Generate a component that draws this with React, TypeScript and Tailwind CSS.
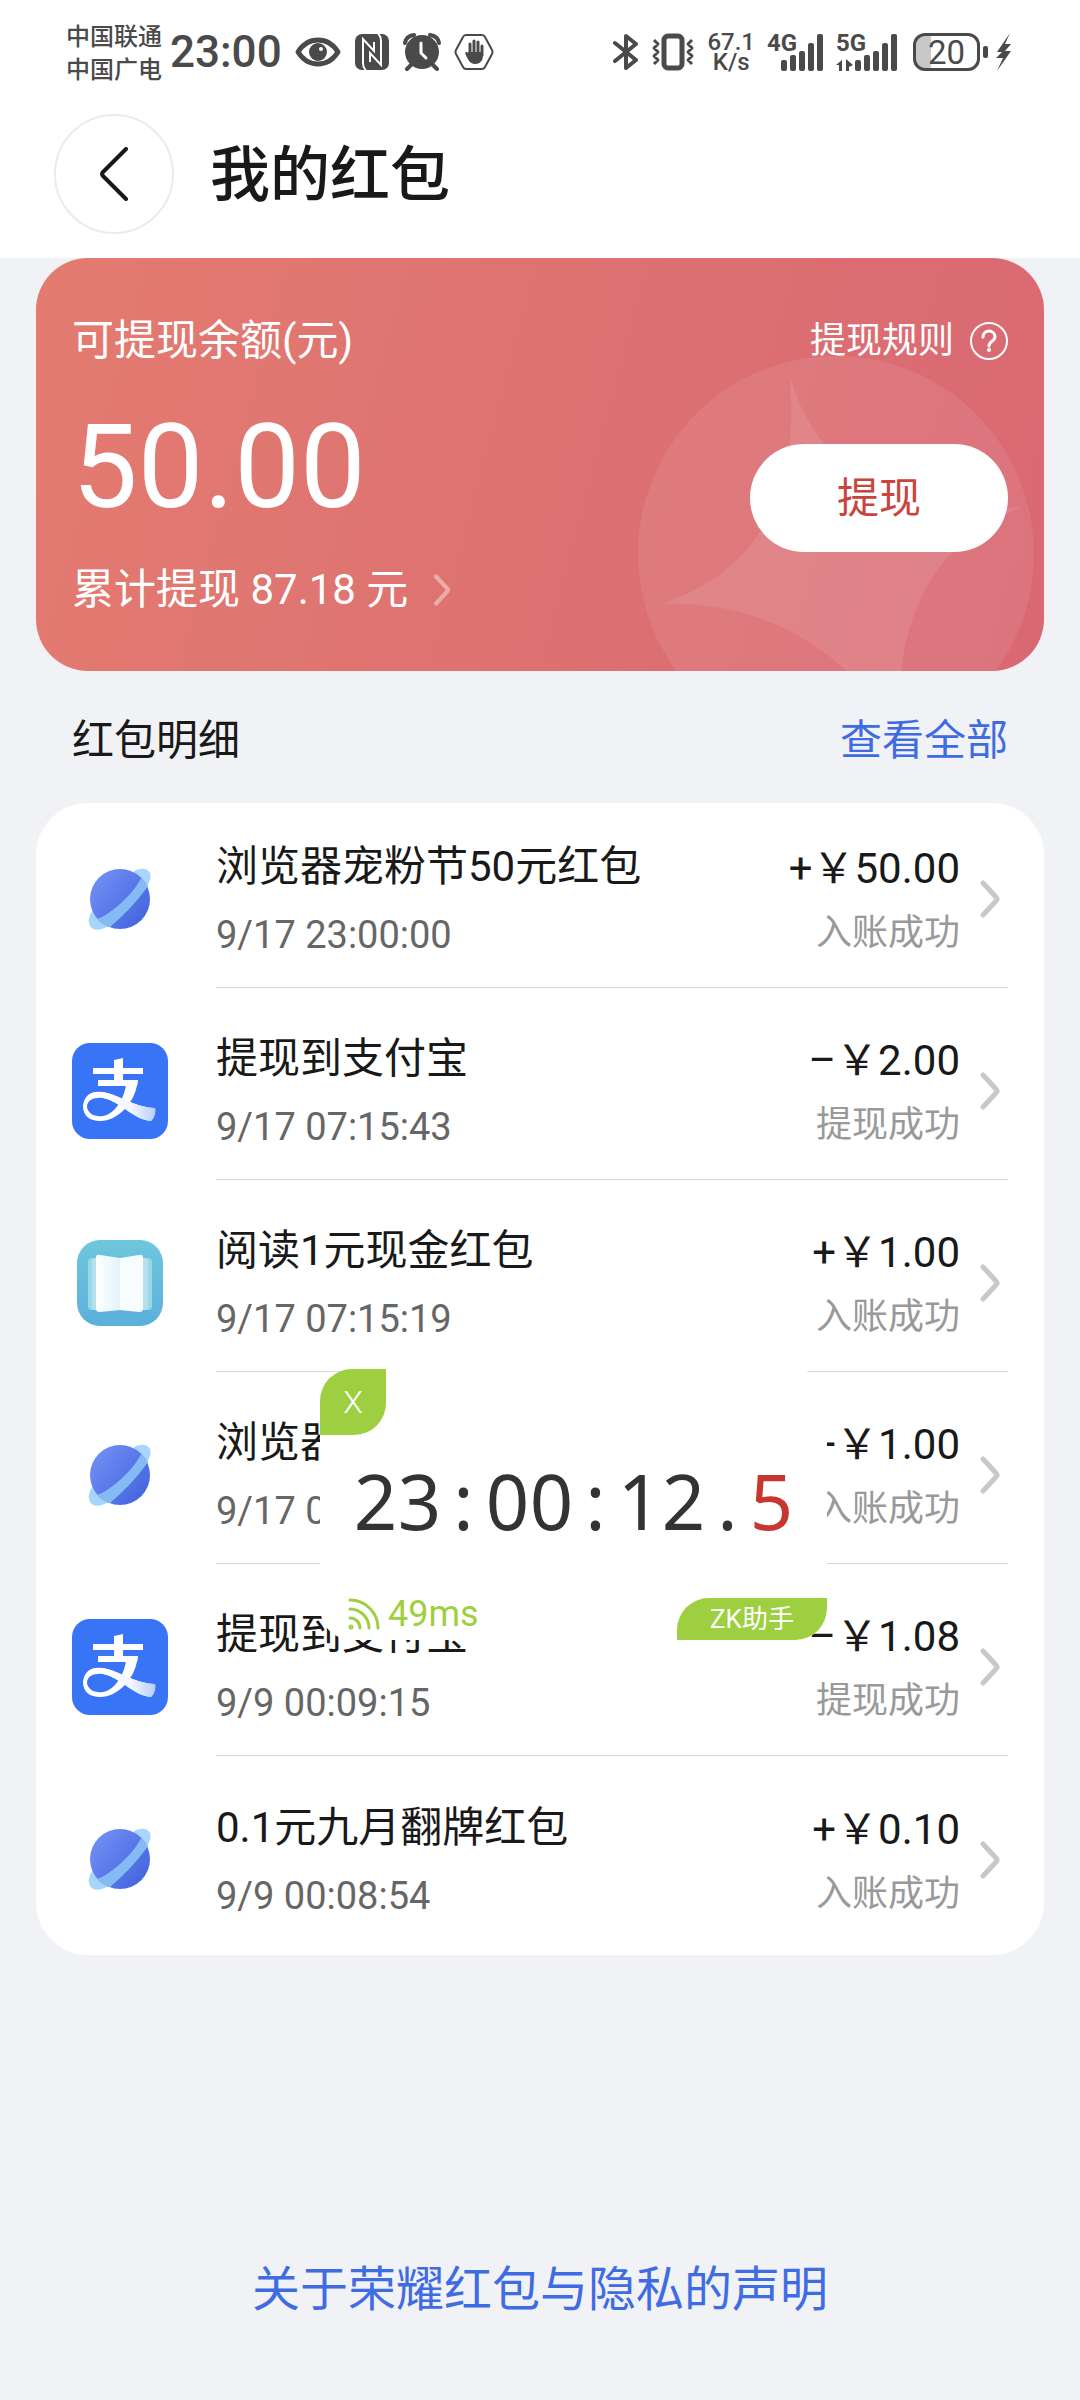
import type { ReactNode } from "react";

type Source = "browser" | "alipay" | "reader";

interface Entry {
  source: Source;
  title: string;
  time: string;
  amount: string;
  status: string;
}

const entries: Entry[] = [
  { source: "browser", title: "浏览器宠粉节50元红包", time: "9/17 23:00:00", amount: "+￥50.00", status: "入账成功" },
  { source: "alipay", title: "提现到支付宝", time: "9/17 07:15:43", amount: "–￥2.00", status: "提现成功" },
  { source: "reader", title: "阅读1元现金红包", time: "9/17 07:15:19", amount: "+￥1.00", status: "入账成功" },
  { source: "browser", title: "浏览器红包", time: "9/17 07:14:52", amount: "+￥1.00", status: "入账成功" },
  { source: "alipay", title: "提现到支付宝", time: "9/9 00:09:15", amount: "–￥1.08", status: "提现成功" },
  { source: "browser", title: "0.1元九月翻牌红包", time: "9/9 00:08:54", amount: "+￥0.10", status: "入账成功" },
];

function BrowserIcon() {
  return (
    <svg viewBox="0 0 64 64" className="size-16">
      <defs>
        <linearGradient id="planet" x1="0" y1="0.1" x2="1" y2="0.9">
          <stop offset="0" stopColor="#7393f3" />
          <stop offset="0.5" stopColor="#5b78ea" />
          <stop offset="1" stopColor="#4263dd" />
        </linearGradient>
      </defs>
      <path
        d="M46 4 C56 -1 65 3 62 13 C56 30 30 57 14 62 C4 65 -2 58 2 48 C4 43 8 38 14 34 L46 14Z"
        fill="#a9d5fa"
      />
      <circle cx="32" cy="32" r="30" fill="url(#planet)" />
      <path
        d="M53 11 C46 26 24 47 9 52 Q14 58 22 60 C34 50 48 36 60 19 Q58 15 53 11Z"
        fill="#86baf4"
      />
    </svg>
  );
}

function AlipayIcon() {
  return (
    <svg viewBox="0 0 96 96" className="size-24">
      <defs>
        <linearGradient id="ribbon" x1="0" y1="0" x2="1" y2="0">
          <stop offset="0" stopColor="#ffffff" />
          <stop offset="0.55" stopColor="#f3f7ff" />
          <stop offset="1" stopColor="#b9cdfb" />
        </linearGradient>
      </defs>
      <rect width="96" height="96" rx="18" fill="#3875f6" />
      <path d="M42 17 Q47 16 51 15 V25 H71 V31 H51 V37 H66 Q66 40 65 43 H26 V37 H42 V31 H21 V25 H42Z" fill="#fff" />
      <path
        d="M54 42 H65 C62 60 46 78 28 78 C18 78 11 73 11 63 C12 52 20 48 29 49 C45 50 60 64 83 65 C84 70 82 75 79 78 C62 77 48 58 31 55 C22 54 15 57 15 64 C16 71 23 74 31 73 C43 71 52 56 54 42Z"
        fill="#fff"
      />
      <path
        d="M29 49 C45 50 60 64 83 65 C84 70 82 75 79 78 C62 77 48 58 31 55Z"
        fill="url(#ribbon)"
      />
    </svg>
  );
}

function ReaderIcon() {
  return (
    <svg viewBox="0 0 86 86" className="size-[86px]">
      <defs>
        <linearGradient id="reader" x1="0" y1="0" x2="0" y2="1">
          <stop offset="0" stopColor="#6dc7dc" />
          <stop offset="1" stopColor="#5bb0dc" />
        </linearGradient>
        <linearGradient id="page" x1="0" y1="0" x2="1" y2="0">
          <stop offset="0" stopColor="#ffffff" />
          <stop offset="1" stopColor="#e2f3fa" />
        </linearGradient>
      </defs>
      <rect width="86" height="86" rx="23" fill="url(#reader)" />
      <rect x="11" y="18" width="64" height="52" rx="4" fill="#98d6e8" />
      <rect x="15" y="18" width="56" height="52" rx="3" fill="#b5e1ef" />
      <path d="M19 18 Q19 14 23 15 L43 18 V70 L23 72 Q19 72 19 69Z" fill="url(#page)" />
      <path d="M66 18 Q66 14 62 15 L43 18 V70 L62 72 Q66 72 66 69Z" fill="#f7fdff" />
    </svg>
  );
}

const icons: Record<Source, ReactNode> = {
  browser: <BrowserIcon />,
  alipay: <AlipayIcon />,
  reader: <ReaderIcon />,
};

function Chevron({ className }: { className: string }) {
  return (
    <svg
      viewBox="0 0 20 38"
      className={className}
      fill="none"
      stroke="currentColor"
      strokeWidth="5"
      strokeLinecap="round"
      strokeLinejoin="round"
    >
      <path d="M3 3 L16 17 Q18 19 16 21 L3 35" />
    </svg>
  );
}

function SignalBars() {
  return (
    <g>
      <rect x="14" y="26" width="6" height="11" rx="2" />
      <rect x="23" y="21" width="6" height="16" rx="2" />
      <rect x="32" y="17" width="6" height="20" rx="2" />
      <rect x="41" y="9" width="6" height="28" rx="2" />
      <rect x="50" y="0" width="6" height="37" rx="2" />
    </g>
  );
}

function StatusBar() {
  return (
    <div className="flex h-[104px] items-center justify-between pl-[66px] pr-[68px] text-[#4a4a4a]">
      <div className="flex items-center">
        <div className="pt-1 text-[24px] leading-[33px] font-medium">
          <p>中国联通</p>
          <p>中国广电</p>
        </div>
        <p className="ml-2 text-[44px] leading-none font-medium">23:00</p>
        <svg viewBox="0 0 46 30" className="ml-[13px] h-[30px] w-[46px]" fill="none">
          <path
            d="M3 15 C13 -1 33 -1 43 15 C33 31 13 31 3 15Z"
            stroke="currentColor"
            strokeWidth="5"
            strokeLinejoin="round"
          />
          <circle cx="23" cy="15" r="9" fill="currentColor" />
          <circle cx="26" cy="12" r="2" fill="#fff" />
        </svg>
        <svg viewBox="0 0 34 36" className="ml-[14px] h-9 w-[34px]" fill="none">
          <rect width="34" height="36" rx="7" fill="currentColor" />
          <path d="M11 36 Q8 34 8 29 V5 L19 17 V8" stroke="#fff" strokeWidth="2" />
          <path d="M23 0 Q26 2 26 7 V31 L15 19 V28" stroke="#fff" strokeWidth="2" />
        </svg>
        <svg viewBox="0 0 38 38" className="ml-[14px] size-[38px]" fill="none" stroke="currentColor">
          <circle cx="19" cy="19" r="17" fill="currentColor" stroke="none" />
          <path d="M2 10 Q3 3 11 2 M36 10 Q35 3 27 2" strokeWidth="4" strokeLinecap="round" />
          <path d="M8 32 L4 36 M30 32 L34 36" strokeWidth="4" strokeLinecap="round" />
          <path d="M18 10 V20 L23 25" stroke="#fff" strokeWidth="3" strokeLinecap="round" />
        </svg>
        <svg viewBox="0 0 40 38" className="ml-[13px] h-[38px] w-10" fill="none" stroke="currentColor">
          <path
            d="M12 2 H28 Q30 2 31 4 L38 17 Q39 19 38 21 L31 34 Q30 36 28 36 H12 Q10 36 9 34 L2 21 Q1 19 2 17 L9 4 Q10 2 12 2Z"
            strokeWidth="2"
          />
          <path d="M16 11 V22 M20 8 V22 M24 9 V22 M28 13 V22" strokeWidth="3" strokeLinecap="round" />
          <path
            d="M14 19 H29 V22 C29 28 26 31 21 31 C16 31 14 27 11 20 C12 18 14 19 15 21Z"
            fill="currentColor"
            stroke="none"
          />
        </svg>
      </div>

      <div className="flex items-center">
        <svg viewBox="0 0 26 38" className="h-[38px] w-[26px]" fill="none" stroke="currentColor">
          <path
            d="M2 10 L23 27 L13 35 V3 L23 11 L2 28"
            strokeWidth="4"
            strokeLinecap="round"
            strokeLinejoin="round"
          />
        </svg>
        <svg viewBox="0 0 44 38" className="ml-3 h-[38px] w-11" fill="none" stroke="currentColor">
          <rect x="13" y="3" width="18" height="32" rx="4" strokeWidth="5" />
          <path
            d="M3 7 L7 11 L3 15 L7 19 L3 23 L7 27 L3 31 M41 7 L37 11 L41 15 L37 19 L41 23 L37 27 L41 31"
            strokeWidth="3"
            strokeLinejoin="round"
          />
        </svg>
        <div className="ml-3 text-center text-[24px] leading-5 font-medium">
          <p>67.1</p>
          <p>K/s</p>
        </div>
        <div className="relative ml-3 h-[37px] w-[57px]">
          <svg viewBox="0 0 57 37" className="h-full w-full" fill="currentColor">
            <SignalBars />
          </svg>
          <span className="absolute top-0 left-0 text-[24px] leading-[18px] font-bold">4G</span>
        </div>
        <div className="relative ml-3 h-[37px] w-[61px]">
          <svg viewBox="0 0 61 37" className="h-full w-full" fill="currentColor">
            <g transform="translate(5 0)">
              <SignalBars />
            </g>
            <path d="M0 31 L6 26 V37 H3 V31Z M10 25 L17 31 L13 33 V37 H10Z" />
          </svg>
          <span className="absolute top-0 left-0 text-[24px] leading-[18px] font-bold">5G</span>
        </div>
        <div className="ml-4 flex h-[38px] w-[67px] items-center justify-center rounded-[12px] border-3 border-[#4a4a4a] bg-linear-to-r from-[#c8c8c8] from-25% to-white to-25% text-[33px] leading-none">
          20
        </div>
        <div className="ml-[3px] h-3 w-[5px] rounded-xs bg-[#4a4a4a]" />
        <svg viewBox="0 0 16 38" className="ml-2 h-[38px] w-4" fill="currentColor">
          <path d="M14 0 L1 19 H6 L0 25 H7 L1 38 L15 18 H9 L15 11 H9Z" />
        </svg>
      </div>
    </div>
  );
}

function BalanceCard() {
  return (
    <section className="relative mx-9 flex justify-between overflow-hidden rounded-[52px] bg-linear-105 from-[#e47b70] via-[#dd7271] to-[#da6873] px-9 pt-[53px] pb-[51px] text-white">
      <svg viewBox="0 0 400 400" className="absolute top-[96px] right-2 size-[400px]">
        <circle cx="200" cy="200" r="198" fill="#fff" fillOpacity="0.08" />
        <path
          d="M153 18 C170 90 240 175 388 152 C310 185 260 240 262 380 C220 310 140 245 25 250 C130 215 165 130 153 18Z"
          fill="#fff"
          fillOpacity="0.09"
        />
      </svg>

      <div className="relative">
        <h2 className="text-[42px] leading-[60px]">可提现余额(元)</h2>
        <p className="mt-9 text-[117px] leading-[120px]">50.00</p>
        <a href="#withdrawn" className="mt-[33px] flex items-center text-[42px] leading-[60px]">
          累计提现 87.18 元
          <Chevron className="ml-6 h-8 w-5 text-white/40" />
        </a>
      </div>

      <div className="relative flex flex-col items-end gap-[73px]">
        <a href="#rules" className="flex items-center gap-4 text-[36px] leading-[60px]">
          提现规则
          <svg viewBox="0 0 38 38" className="size-[38px]" fill="none" stroke="currentColor">
            <circle cx="19" cy="19" r="18" strokeWidth="2" />
            <path d="M13 15 C13 7 25 7 25 15 C25 19 19 19 19 24" strokeWidth="3" strokeLinecap="round" />
            <circle cx="19" cy="28" r="2" fill="currentColor" stroke="none" />
          </svg>
        </a>
        <button type="button" className="h-[108px] w-[258px] rounded-full bg-white text-[42px] text-[#c9453c]">
          提现
        </button>
      </div>
    </section>
  );
}

function EntryRow({ entry, last }: { entry: Entry; last: boolean }) {
  return (
    <li>
      <a href="#detail" className="flex h-48 px-9">
        <div className="flex w-24 shrink-0 items-center justify-center">{icons[entry.source]}</div>
        <div
          className={`mt-2 mb-[7px] ml-12 flex min-w-0 flex-1 items-center justify-between ${last ? "" : "border-b border-[#d9d9d9]"}`}
        >
          <div className="min-w-0 pt-1">
            <h3 className="truncate text-[42px] leading-[60px] text-[#191919]">{entry.title}</h3>
            <p className="mt-2 text-[38px] leading-[60px] text-[#666]">{entry.time}</p>
          </div>
          <div className="flex items-center">
            <div className="pt-1 text-right">
              <p className="text-[42px] leading-[60px] text-[#191919]">{entry.amount}</p>
              <p className="mt-1 text-[36px] leading-[60px] text-[#999]">{entry.status}</p>
            </div>
            <Chevron className="mr-2 ml-5 h-[38px] w-5 text-[#c8c8c8]" />
          </div>
        </div>
      </a>
    </li>
  );
}

// Floating clock that sits on top of whatever app is open.
function ClockWidget() {
  const clock = "23:00:12.";

  return (
    <div className="absolute top-[1369px] left-[320px] flex h-[271px] w-[507px] flex-col rounded-[32px] bg-white">
      <button
        type="button"
        aria-label="关闭"
        className="size-[66px] rounded-tl-[32px] rounded-br-[32px] bg-[#9dcf40] text-[32px] font-light text-white"
      >
        X
      </button>
      <p className="mt-7 text-center font-['Noto_Sans'] text-[76px] leading-[76px] text-[#333]">
        {clock.split("").map((char, i) => (
          <span key={i} className="inline-block w-11 text-center">
            {char}
          </span>
        ))}
        <span className="inline-block w-11 text-center text-[#c8372f]">5</span>
      </p>
      <div className="mt-auto flex items-start justify-between pl-7">
        <div className="flex items-center gap-2 text-[#9dcf40]">
          <svg
            viewBox="0 0 32 32"
            className="size-8"
            fill="none"
            stroke="currentColor"
            strokeWidth="3"
            strokeLinecap="round"
          >
            <path d="M2 2 A28 28 0 0 1 30 30 M2 11 A19 19 0 0 1 21 30 M2 20 A10 10 0 0 1 12 30" />
            <circle cx="3" cy="29" r="1" />
          </svg>
          <span className="text-[36px] leading-7">49ms</span>
        </div>
        <span className="h-[42px] w-[150px] rounded-tl-[32px] rounded-br-[32px] bg-[#9dcf40] text-center text-[26px] leading-[42px] text-white">
          ZK助手
        </span>
      </div>
    </div>
  );
}

export default function App() {
  return (
    <div className="relative flex min-h-screen flex-col bg-[#f1f2f6] font-[Roboto,'Noto_Sans_CJK_SC',sans-serif]">
      <div className="bg-white">
        <StatusBar />
        <header className="flex items-center gap-9 px-[54px] pt-[10px] pb-6">
          <button
            type="button"
            aria-label="返回"
            className="flex size-[120px] items-center justify-center rounded-full border-2 border-[#ebebeb]"
          >
            <svg
              viewBox="0 0 28 54"
              className="h-[54px] w-7"
              fill="none"
              stroke="#191919"
              strokeWidth="4"
              strokeLinecap="round"
            >
              <path d="M26 2 L3 25 Q1 27 3 29 L26 52" />
            </svg>
          </button>
          <h1 className="pt-1 text-[60px] leading-[80px] font-medium text-[#191919]">我的红包</h1>
        </header>
      </div>

      <main>
        <BalanceCard />
        <div className="flex items-center justify-between px-[72px] pt-10 pb-8 text-[42px] leading-[60px]">
          <h2 className="text-[#191919]">红包明细</h2>
          <a href="#all" className="text-[#3f6be3]">
            查看全部
          </a>
        </div>
        <ul className="mx-9 overflow-hidden rounded-[52px] bg-white">
          {entries.map((entry, i) => (
            <EntryRow key={i} entry={entry} last={i === entries.length - 1} />
          ))}
        </ul>
      </main>

      <footer className="mt-auto pb-[78px] text-center">
        <a href="#privacy" className="text-[48px] leading-[64px] text-[#3f6be3]">
          关于荣耀红包与隐私的声明
        </a>
      </footer>

      <ClockWidget />
    </div>
  );
}
